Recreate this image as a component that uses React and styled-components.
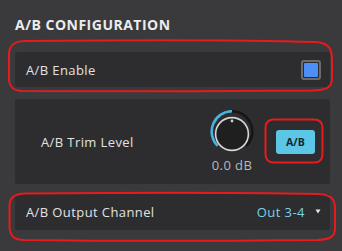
import React from "react";
import styled, { createGlobalStyle } from "styled-components";

const Global = createGlobalStyle`
  html, body { margin: 0; padding: 0; background: #3a3a3d; }
  body { font-family: "Open Sans", "Noto Sans", "Liberation Sans", sans-serif; -webkit-font-smoothing: antialiased; }
`;

const Page = styled.div`
  position: relative;
  width: 342px;
  height: 251px;
  box-sizing: border-box;
  padding: 15px 12px 0 15px;
  display: flex;
  flex-direction: column;
  background: #3a3a3d;
  overflow: hidden;
`;

const Title = styled.div`
  font-size: 14px;
  font-weight: 700;
  line-height: 19px;
  color: #ececec;
  letter-spacing: 0.5px;
  margin-bottom: 18px;
`;

const Panel = styled.div`
  background: #2d2d2f;
  border-radius: 2px;
  height: ${(p) => p.$h}px;
  margin-bottom: ${(p) => p.$mb || 0}px;
  padding: ${(p) => p.$pad};
  box-sizing: border-box;
  display: flex;
  align-items: center;
  justify-content: space-between;
`;

const Label = styled.span`
  font-size: 13px;
  color: #e2e2e2;
  letter-spacing: 0.4px;
  line-height: 16px;
`;

const CheckBox = styled.div`
  width: 20px;
  height: 20px;
  box-sizing: border-box;
  border: 2px solid #6b6b6e;
  border-radius: 3px;
  padding: 1px;
  background: #2a2a2c;
  &::after {
    content: "";
    display: block;
    width: 100%;
    height: 100%;
    background: #4d8ff6;
    border-radius: 1px;
  }
`;

const Controls = styled.div`
  display: flex;
  align-items: center;
  gap: 22px;
`;

const KnobCol = styled.div`
  display: flex;
  flex-direction: column;
  align-items: center;
  gap: 3px;
`;

const KnobValue = styled.span`
  font-size: 13px;
  color: #b9b9bb;
  letter-spacing: 0.4px;
  line-height: 16px;
`;

const ABButton = styled.button`
  width: 39px;
  height: 24px;
  border: none;
  border-radius: 3px;
  background: #5bc6e6;
  color: #14262d;
  font-family: "Open Sans", "Liberation Sans", sans-serif;
  font-size: 10.5px;
  font-weight: 700;
  padding: 0;
  letter-spacing: 0.2px;
`;

const Select = styled.div`
  display: flex;
  align-items: center;
  gap: 10px;
  color: #7ad3e8;
  font-size: 13px;
  letter-spacing: 0.45px;
  line-height: 16px;
`;

const Caret = styled.svg`
  display: block;
  margin-top: -2px;
`;

const Overlay = styled.svg`
  position: absolute;
  left: 0;
  top: 0;
  pointer-events: none;
`;

function Knob() {
  const cx = 22, cy = 21.5, r = 20.3;
  const k = r * Math.SQRT1_2;
  return (
    <svg width="44" height="44" viewBox="0 0 44 44">
      <path d={`M ${cx - k} ${cy + k} A ${r} ${r} 0 0 1 ${cx} ${cy - r}`} fill="none" stroke="#45b4df" strokeWidth="2.6" />
      <path d={`M ${cx} ${cy - r} A ${r} ${r} 0 0 1 ${cx + k} ${cy + k}`} fill="none" stroke="#161617" strokeWidth="2.6" />
      <circle cx={cx} cy={cy + 2.5} r="16.4" fill="#1f1f20" stroke="#d6d6d6" strokeWidth="1.6" />
      <circle cx={cx} cy={cy - 10.5} r="1.4" fill="#cfcfcf" />
    </svg>
  );
}

export default function App() {
  return (
    <>
      <Global />
      <Page>
        <Title>A/B CONFIGURATION</Title>
        <Panel $h={35} $mb={12} $pad="0 9px 0 11px">
          <Label>A/B Enable</Label>
          <CheckBox />
        </Panel>
        <Panel $h={85} $mb={10} $pad="0 15px 0 26px">
          <Label>A/B Trim Level</Label>
          <Controls>
            <KnobCol>
              <Knob />
              <KnobValue>0.0 dB</KnobValue>
            </KnobCol>
            <ABButton>A/B</ABButton>
          </Controls>
        </Panel>
        <Panel $h={36} $pad="0 9px 0 11px">
          <Label>A/B Output Channel</Label>
          <Select>
            <span>Out 3-4</span>
            <Caret width="6" height="5" viewBox="0 0 6 5">
              <path d="M0.5 0.5 L5.5 0.5 L3 4.5 Z" fill="#e6e6e6" />
            </Caret>
          </Select>
        </Panel>
        <Overlay width="342" height="251" viewBox="0 0 342 251">
          <g fill="none" stroke="#e51b1f" strokeWidth="2">
            <path d="M 24 41 C 120 40, 250 40, 316 42 C 330 43, 332 50, 332 60 L 332 78 C 332 88, 326 90, 312 90.5 C 220 91.5, 100 91.5, 22 91 C 12 90.5, 9 86, 9 78 L 9 55 C 9 46, 13 41.5, 24 41 Z" />
            <path d="M 274 119.5 L 314 119.5 C 320 119.5, 322.5 122, 322.5 128 L 322.5 154 C 322.5 160, 320 162.5, 314 162.5 L 274 162.5 C 268 162.5, 265.5 160, 265.5 154 L 265.5 128 C 265.5 122, 268 119.5, 274 119.5 Z" />
            <path d="M 26 193.5 C 120 192.5, 250 192.5, 318 194 C 331 194.5, 335 199, 335 208 L 335 228 C 335 237, 330 239.5, 318 240 C 220 241, 100 241, 24 240 C 13 239.5, 9.5 235, 9.5 226 L 9.5 206 C 9.5 198, 13 194, 26 193.5 Z" />
          </g>
        </Overlay>
      </Page>
    </>
  );
}
